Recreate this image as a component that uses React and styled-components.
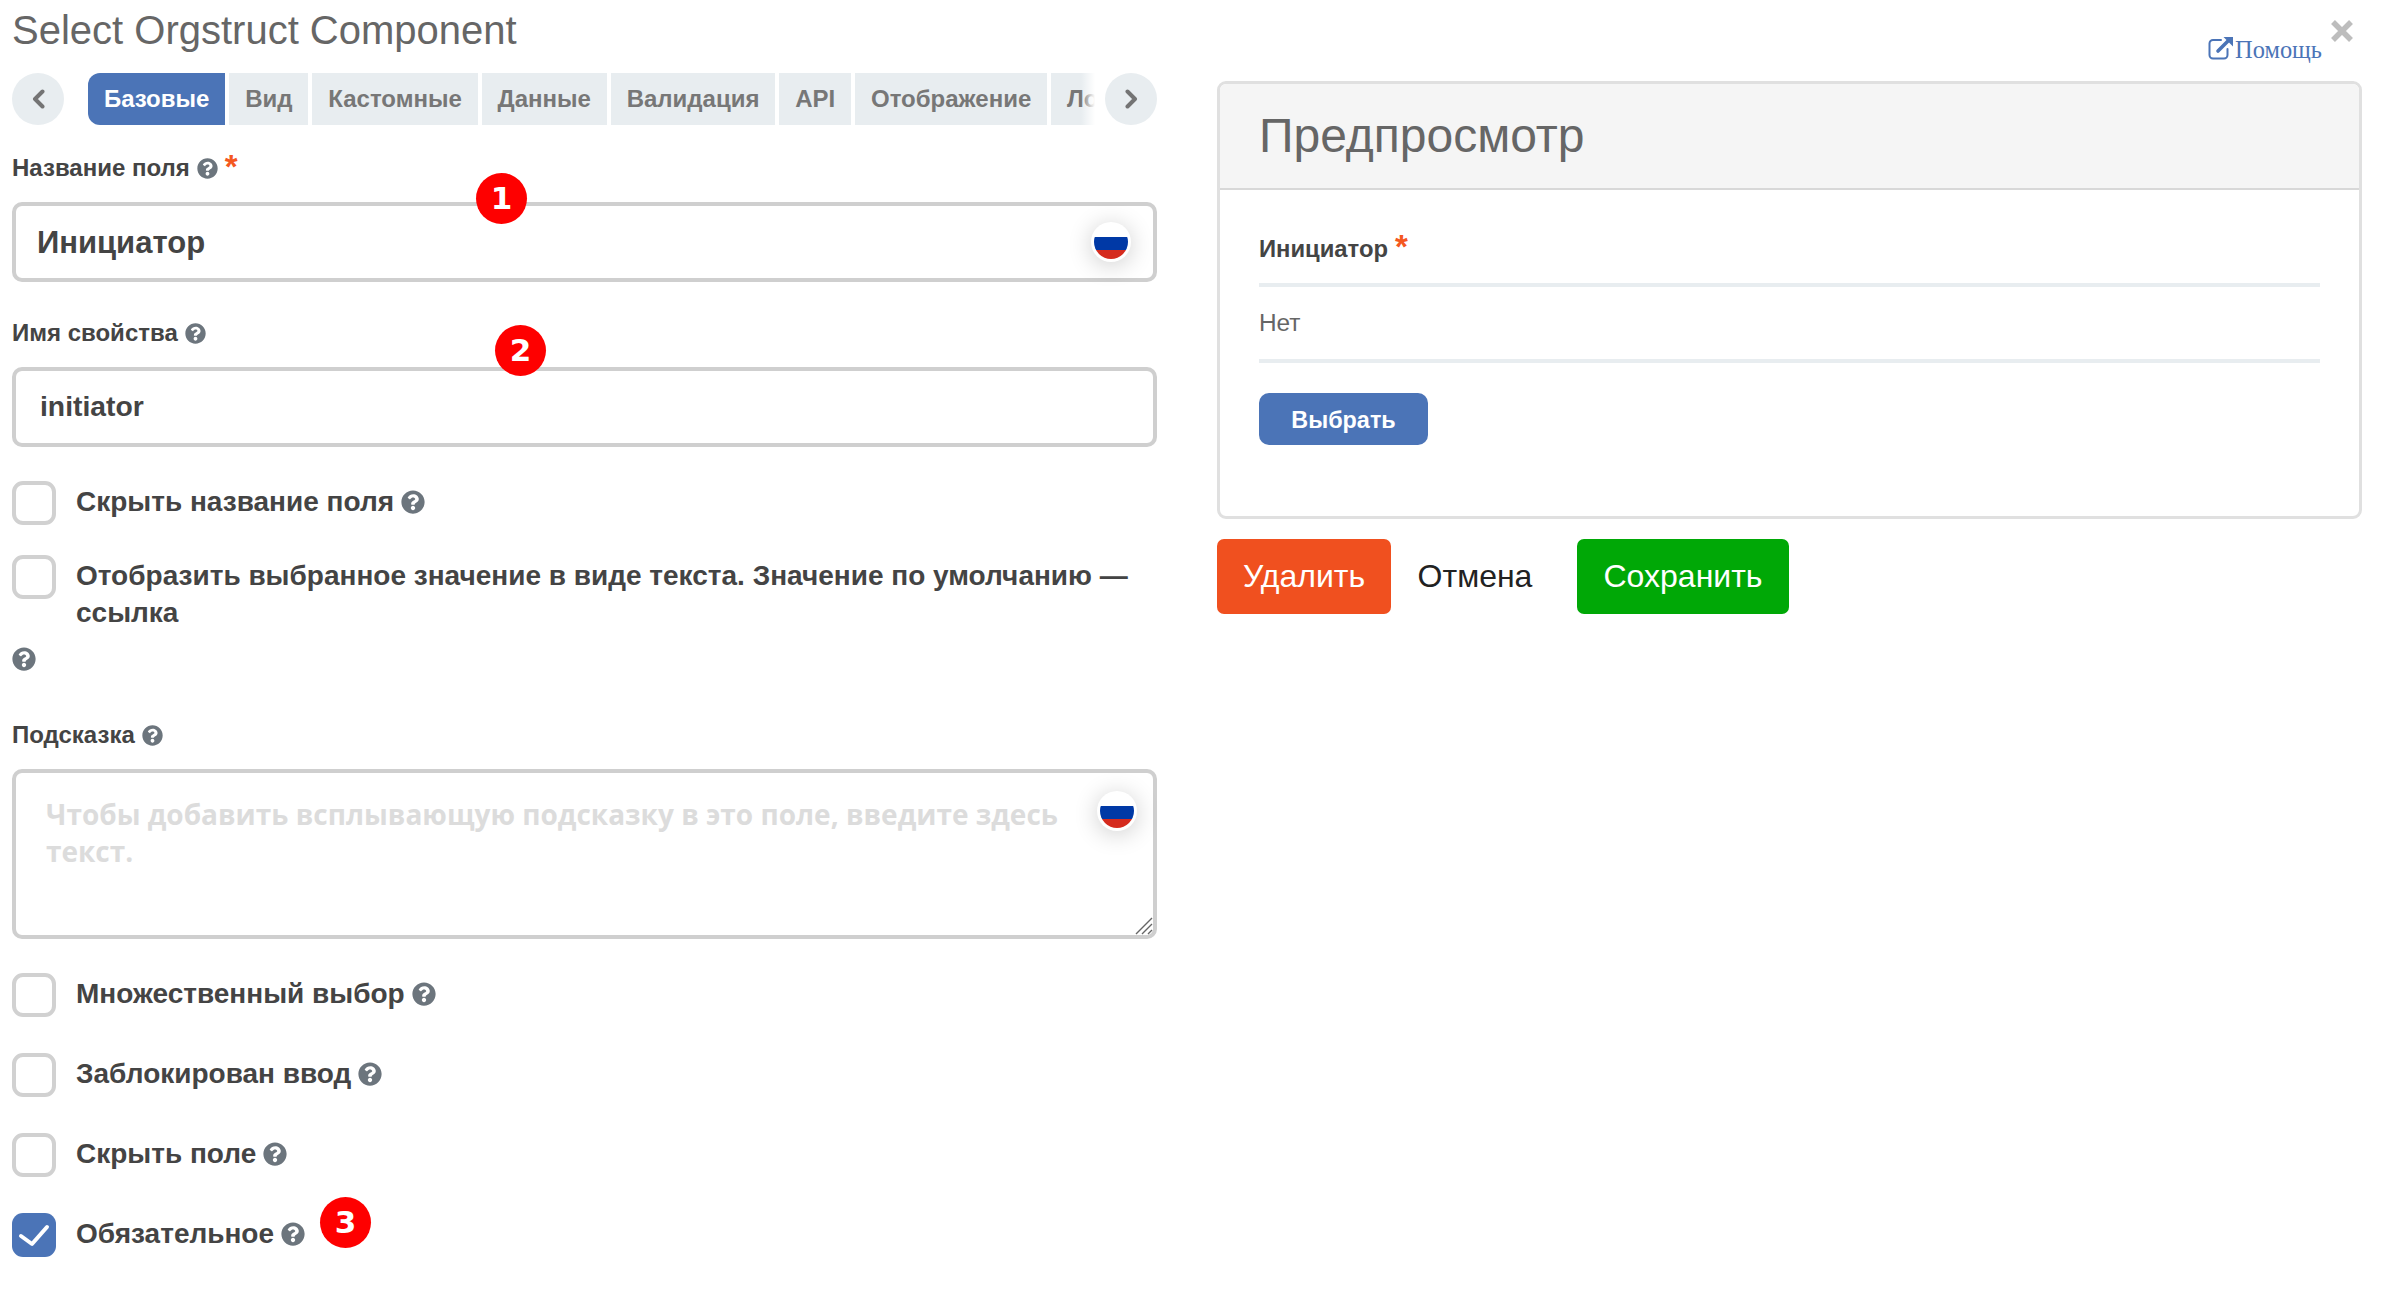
import React from "react";
import styled, { createGlobalStyle } from "styled-components";
import { FaQuestionCircle } from "react-icons/fa";

const Global = createGlobalStyle`
  html, body { margin: 0; padding: 0; background: #fff; }
  body { font-family: "Liberation Sans", Arial, sans-serif; color: #444; }
  * { box-sizing: border-box; }
`;

const Page = styled.div`
  display: flex;
  gap: 60px;
  width: 2383px;
  height: 1300px;
  padding: 0 21px 0 12px;
  overflow: hidden;
`;
const LeftColumn = styled.div`
  width: 1145px;
  flex: none;
`;
const RightColumn = styled.div`
  width: 1145px;
  flex: none;
`;
const Title = styled.h1`
  margin: 0;
  height: 73px;
  padding-top: 8px;
  font-size: 40px;
  line-height: 44px;
  font-weight: 400;
  color: #666;
`;
const TabBar = styled.div`
  display: flex;
  align-items: center;
  height: 52px;
`;
const RoundNav = styled.button`
  flex: none;
  width: 52px;
  height: 52px;
  border: 0;
  padding: 0;
  border-radius: 50%;
  background: #e8edf0;
  color: #747474;
  display: flex;
  align-items: center;
  justify-content: center;
`;
const TabScroller = styled.div`
  position: relative;
  flex: none;
  width: 1007px;
  margin: 0 10px 0 24px;
  display: flex;
  gap: 4px;
  overflow: hidden;
  &::after {
    content: "";
    position: absolute;
    right: 0;
    top: 0;
    bottom: 0;
    width: 14px;
    background: linear-gradient(to right, rgba(255,255,255,0), #fff);
  }
`;
const Tab = styled.div`
  flex: none;
  height: 52px;
  line-height: 52px;
  padding: 0 15.9px;
  font-size: 24px;
  font-weight: 700;
  background: ${(p) => (p.$active ? "#4b74b7" : "#e8edf0")};
  color: ${(p) => (p.$active ? "#fff" : "#777")};
  border-radius: ${(p) => (p.$active ? "12px 0 0 12px" : "0")};
`;
const Field = styled.div`
  margin-top: ${(p) => p.$top || 34}px;
`;
const Label = styled.div`
  display: flex;
  align-items: center;
  gap: 7px;
  height: 34px;
  margin-bottom: 17px;
  font-size: 24px;
  font-weight: 700;
  color: #444;
`;
const Star = styled.span`
  color: #f4581f;
  font-size: 33px;
  font-weight: 700;
  line-height: 1;
  align-self: flex-start;
  margin-top: ${(p) => p.$top}px;
`;
const HelpIcon = styled(FaQuestionCircle)`
  flex: none;
  color: #6c757d;
  font-size: ${(p) => p.$size || 21}px;
`;
const InputWrap = styled.div`
  position: relative;
`;
const TextInput = styled.input`
  display: block;
  width: 100%;
  height: 80px;
  border: 4px solid #cfcfcf;
  border-radius: 10px;
  padding: ${(p) => p.$top}px 0 ${(p) => p.$bottom}px ${(p) => p.$pad}px;
  font-family: "Liberation Sans", Arial, sans-serif;
  font-size: ${(p) => p.$size}px;
  font-weight: 700;
  color: #444;
  outline: none;
  background: #fff;
`;
const TextArea = styled.textarea`
  display: block;
  width: 100%;
  height: 170px;
  resize: none;
  border: 4px solid #cfcfcf;
  border-radius: 10px;
  padding: 22.5px 80px 0 30px;
  line-height: 37px;
  font-family: "Open Sans", sans-serif;
  font-size: 28px;
  font-weight: 700;
  outline: none;
  background: #fff;
  &::placeholder { color: #dcdcdc; opacity: 1; }
`;
const ResizeGrip = styled.svg`
  position: absolute;
  right: 4px;
  bottom: 4px;
  width: 18px;
  height: 18px;
  color: #666;
`;
const FlagChip = styled.span`
  position: absolute;
  top: ${(p) => p.$top}px;
  right: ${(p) => p.$right}px;
  width: 40px;
  height: 40px;
  border-radius: 50%;
  background: #fff;
  box-shadow: 0 3px 24px rgba(0, 0, 0, 0.2);
  display: flex;
  align-items: center;
  justify-content: center;
`;
const Badge = styled.span`
  position: absolute;
  left: ${(p) => p.$left}px;
  top: ${(p) => p.$top}px;
  width: 51px;
  height: 51px;
  border-radius: 50%;
  background: #fe0000;
  color: #fff;
  font-family: "DejaVu Sans", sans-serif;
  font-weight: 700;
  font-size: 31px;
  line-height: 50px;
  text-align: center;
`;
const CheckRow = styled.div`
  position: relative;
  display: flex;
  align-items: flex-start;
  gap: 20px;
  margin-top: ${(p) => p.$top}px;
`;
const Box = styled.span`
  flex: none;
  width: 44px;
  height: 44px;
  border-radius: 11px;
  border: ${(p) => (p.$checked ? "0" : "4px solid #d1d1d1")};
  background: ${(p) => (p.$checked ? "#4b74b7" : "#fff")};
`;
const CheckText = styled.div`
  display: flex;
  flex-wrap: wrap;
  align-items: center;
  gap: 7px;
  padding-top: 3px;
  font-size: 28px;
  line-height: 36.5px;
  font-weight: 700;
  color: #444;
`;
const LoneHelp = styled.div`
  display: flex;
  height: 24px;
  margin-top: 16px;
`;
const TopActions = styled.div`
  display: flex;
  justify-content: flex-end;
  height: 81px;
  padding-right: 9px;
`;
const HelpLink = styled.a`
  display: flex;
  align-items: flex-start;
  gap: 1px;
  padding-top: 36px;
  margin-right: 9px;
  font-family: "Liberation Serif", serif;
  font-size: 24.4px;
  line-height: 28px;
  color: #4b74b7;
`;
const CloseMark = styled.svg`
  margin-top: 20px;
  width: 22px;
  height: 22px;
  color: #bdbdbd;
`;
const Panel = styled.section`
  height: 438px;
  border: 3px solid #e0e0e0;
  border-radius: 9px;
  overflow: hidden;
`;
const PanelHead = styled.header`
  height: 106px;
  background: #f5f5f5;
  border-bottom: 2px solid #d8d8d8;
  padding: 25px 0 0 39px;
  font-size: 48px;
  line-height: 54px;
  color: #666;
`;
const PanelBody = styled.div`
  padding: 25px 39px 0;
`;
const PreviewLabel = styled.div`
  display: flex;
  align-items: center;
  gap: 7px;
  height: 68px;
  font-size: 23.8px;
  line-height: 68px;
  font-weight: 700;
  color: #444;
`;
const Rule = styled.div`
  height: 4px;
  background: #e8edf0;
`;
const PreviewValue = styled.div`
  height: 72px;
  line-height: 72px;
  font-size: 24.4px;
  color: #666;
`;
const PickButton = styled.button`
  display: block;
  margin-top: 30px;
  width: 169px;
  height: 52px;
  border: 0;
  border-radius: 10px;
  padding: 2px 0 0;
  background: #4b74b7;
  color: #fff;
  font-family: "Liberation Sans", Arial, sans-serif;
  font-size: 23.4px;
  font-weight: 700;
`;
const ButtonRow = styled.div`
  display: flex;
  align-items: center;
  margin-top: 20px;
`;
const ActionButton = styled.button`
  height: 75px;
  width: ${(p) => p.$w}px;
  margin-left: ${(p) => p.$ml || 0}px;
  border: 0;
  padding: 0;
  border-radius: 7px;
  background: ${(p) => p.$bg || "transparent"};
  color: ${(p) => (p.$bg ? "#fff" : "#222")};
  font-family: "Liberation Sans", Arial, sans-serif;
  font-size: 32px;
`;

const Chevron = ({ dir }) => (
  <svg width="13" height="20" viewBox="0 0 13 20" fill="none" stroke="currentColor" strokeWidth="4" strokeLinecap="round" strokeLinejoin="round">
    <path d={dir === "left" ? "M10.5 2.5 L3 10 L10.5 17.5" : "M2.5 2.5 L10 10 L2.5 17.5"} />
  </svg>
);

const RussianFlag = () => (
  <svg width="34" height="34" viewBox="0 0 34 34">
    <defs>
      <clipPath id="flagCircle"><circle cx="17" cy="17" r="17" /></clipPath>
    </defs>
    <g clipPath="url(#flagCircle)">
      <rect width="34" height="12" fill="#fff" />
      <rect y="12" width="34" height="13" fill="#0039a6" />
      <rect y="25" width="34" height="9" fill="#d52b1e" />
    </g>
  </svg>
);

const ExternalIcon = () => (
  <svg width="26" height="24" viewBox="0 0 26 24" fill="none" stroke="#4b74b7" strokeLinecap="round">
    <path d="M13 4 H5 a3.5 3.5 0 0 0 -3.5 3.5 V19 a3.5 3.5 0 0 0 3.5 3.5 H16 a3.5 3.5 0 0 0 3.5 -3.5 V13" strokeWidth="2" />
    <path d="M10 15 L20 5" strokeWidth="3.6" />
    <path d="M15.5 1 H25 V10.5 Z" fill="#4b74b7" stroke="none" />
  </svg>
);

const Check = ({ label, top, checked, children }) => (
  <CheckRow $top={top}>
    <Box $checked={checked}>
      {checked && (
        <svg width="44" height="44" viewBox="0 0 44 44" fill="none" stroke="#fff" strokeWidth="4" strokeLinecap="round" strokeLinejoin="round">
          <path d="M9 23 L20 31 L35 14" />
        </svg>
      )}
    </Box>
    <CheckText>
      {label}
      <HelpIcon $size={24} />
    </CheckText>
    {children}
  </CheckRow>
);

export default function App() {
  return (
    <Page>
      <Global />
      <LeftColumn>
        <Title>Select Orgstruct Component</Title>
        <TabBar>
          <RoundNav aria-label="Назад"><Chevron dir="left" /></RoundNav>
          <TabScroller>
            <Tab $active>Базовые</Tab>
            <Tab>Вид</Tab>
            <Tab>Кастомные</Tab>
            <Tab>Данные</Tab>
            <Tab>Валидация</Tab>
            <Tab>API</Tab>
            <Tab>Отображение</Tab>
            <Tab>Логика</Tab>
          </TabScroller>
          <RoundNav aria-label="Вперёд"><Chevron dir="right" /></RoundNav>
        </TabBar>

        <Field $top={26}>
          <Label>Название поля <HelpIcon /> <Star $top={-1}>*</Star></Label>
          <InputWrap>
            <TextInput $pad={21} $top={2} $bottom={0} $size={31} readOnly value="Инициатор" />
            <FlagChip $top={20} $right={26}><RussianFlag /></FlagChip>
            <Badge $left={464} $top={-29}>1</Badge>
          </InputWrap>
        </Field>

        <Field>
          <Label>Имя свойства <HelpIcon /></Label>
          <InputWrap>
            <TextInput $pad={24} $top={0} $bottom={2} $size={28.3} readOnly value="initiator" />
            <Badge $left={483} $top={-42}>2</Badge>
          </InputWrap>
        </Field>

        <Check top={34} label="Скрыть название поля" />
        <CheckRow $top={30}>
          <Box />
          <CheckText>Отобразить выбранное значение в виде текста. Значение по умолчанию — ссылка</CheckText>
        </CheckRow>
        <LoneHelp><HelpIcon $size={24} /></LoneHelp>

        <Field $top={47}>
          <Label>Подсказка <HelpIcon /></Label>
          <InputWrap>
            <TextArea readOnly placeholder="Чтобы добавить всплывающую подсказку в это поле, введите здесь текст." />
            <FlagChip $top={22} $right={20}><RussianFlag /></FlagChip>
            <ResizeGrip viewBox="0 0 18 18" fill="none" stroke="currentColor" strokeWidth="1.4">
              <path d="M1 17 L17 1 M7 17 L17 7 M13 17 L17 13" />
            </ResizeGrip>
          </InputWrap>
        </Field>

        <Check top={34} label="Множественный выбор" />
        <Check top={36} label="Заблокирован ввод" />
        <Check top={36} label="Скрыть поле" />
        <Check top={36} checked label="Обязательное">
          <Badge $left={308} $top={-16}>3</Badge>
        </Check>
      </LeftColumn>

      <RightColumn>
        <TopActions>
          <HelpLink><ExternalIcon />Помощь</HelpLink>
          <CloseMark viewBox="0 0 22 22" fill="none" stroke="currentColor" strokeWidth="5.5">
            <path d="M2 2 L20 20 M20 2 L2 20" />
          </CloseMark>
        </TopActions>
        <Panel>
          <PanelHead>Предпросмотр</PanelHead>
          <PanelBody>
            <PreviewLabel>Инициатор <Star $top={15}>*</Star></PreviewLabel>
            <Rule />
            <PreviewValue>Нет</PreviewValue>
            <Rule />
            <PickButton>Выбрать</PickButton>
          </PanelBody>
        </Panel>
        <ButtonRow>
          <ActionButton $w={174} $bg="#f0501f">Удалить</ActionButton>
          <ActionButton $w={162} $ml={3}>Отмена</ActionButton>
          <ActionButton $w={212} $ml={21} $bg="#00a806">Сохранить</ActionButton>
        </ButtonRow>
      </RightColumn>
    </Page>
  );
}
